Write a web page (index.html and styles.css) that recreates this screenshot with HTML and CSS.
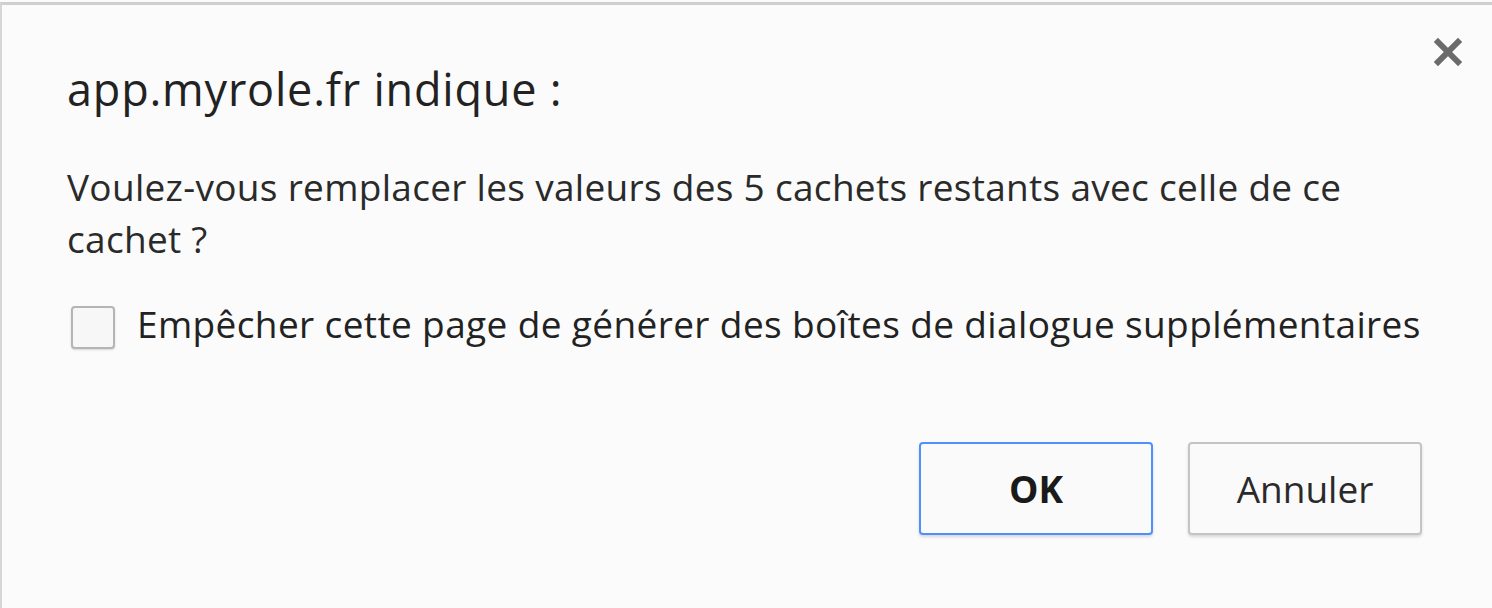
FILE: index.html
```html
<!DOCTYPE html>
<html lang="fr">
<head>
    <meta charset="UTF-8">
    <meta name="viewport" content="width=device-width, initial-scale=1.0">
    <title>app.myrole.fr indique</title>
    <link rel="stylesheet" href="styles.css">
</head>
<body>
    <div class="dialog">
        <button class="close-btn" aria-label="Fermer">
            <svg width="28" height="28" viewBox="0 0 28 28">
                <path d="M4 4 L24 24 M24 4 L4 24" stroke="#6b6b6b" stroke-width="6" stroke-linecap="square"/>
            </svg>
        </button>

        <h1 class="dialog-title">app.myrole.fr indique :</h1>

        <p class="dialog-message">Voulez-vous remplacer les valeurs des 5 cachets restants avec celle de ce cachet ?</p>

        <label class="suppress">
            <span class="checkbox"></span>
            <span class="suppress-text">Empêcher cette page de générer des boîtes de dialogue supplémentaires</span>
        </label>

        <div class="dialog-buttons">
            <button class="btn btn-ok">OK</button>
            <button class="btn">Annuler</button>
        </div>
    </div>
</body>
</html>
```

FILE: styles.css
```css
/* Boîte de dialogue */
html, body {
    margin: 0;
    height: 100%;
    background: #fbfbfb;
}

body {
    font-family: 'Open Sans', 'Liberation Sans', sans-serif;
    color: #333;
    overflow: hidden;
}

.dialog {
    position: relative;
    height: 100%;
    box-sizing: border-box;
    margin-top: 2px;
    border-top: 3px solid #cfcfcf;
    border-left: 2px solid #d6d6d6;
    background: #fbfbfb;
    padding: 56px 70px 0 65px;
}

.close-btn {
    position: absolute;
    top: 33px;
    right: 30px;
    padding: 0;
    border: none;
    background: none;
    cursor: pointer;
}

.close-btn svg {
    display: block;
}

.dialog-title {
    margin: 0;
    font-size: 45px;
    font-weight: normal;
    letter-spacing: 0.8px;
    color: #222;
    line-height: 56px;
}

.dialog-message {
    margin: 44px 0 0;
    width: 1340px;
    font-size: 37px;
    letter-spacing: 0.3px;
    line-height: 52px;
    color: #2a2a2a;
}

.suppress {
    margin-top: 33px;
    display: flex;
    align-items: center;
    gap: 22px;
    font-size: 37px;
    letter-spacing: 0.38px;
    line-height: 52px;
    color: #222;
}

.suppress-text {
    padding-bottom: 6px;
}

.checkbox {
    flex: none;
    width: 40px;
    height: 39px;
    margin-left: 4px;
    border: 2px solid #b5b5b5;
    border-radius: 4px;
    background: #f7f7f7;
    box-shadow: 0 1px 2px rgba(0, 0, 0, 0.15);
}

.dialog-buttons {
    margin-top: 86px;
    display: flex;
    justify-content: flex-end;
    gap: 35px;
}

.btn {
    width: 234px;
    height: 93px;
    border: 2px solid #c4c4c4;
    border-radius: 4px;
    background: #fafafa;
    font-family: inherit;
    font-size: 37px;
    color: #2a2a2a;
    box-shadow: 0 2px 3px rgba(0, 0, 0, 0.14);
}

.btn-ok {
    border-color: #4d90fe;
    font-weight: bold;
    color: #1a1a1a;
}
```
